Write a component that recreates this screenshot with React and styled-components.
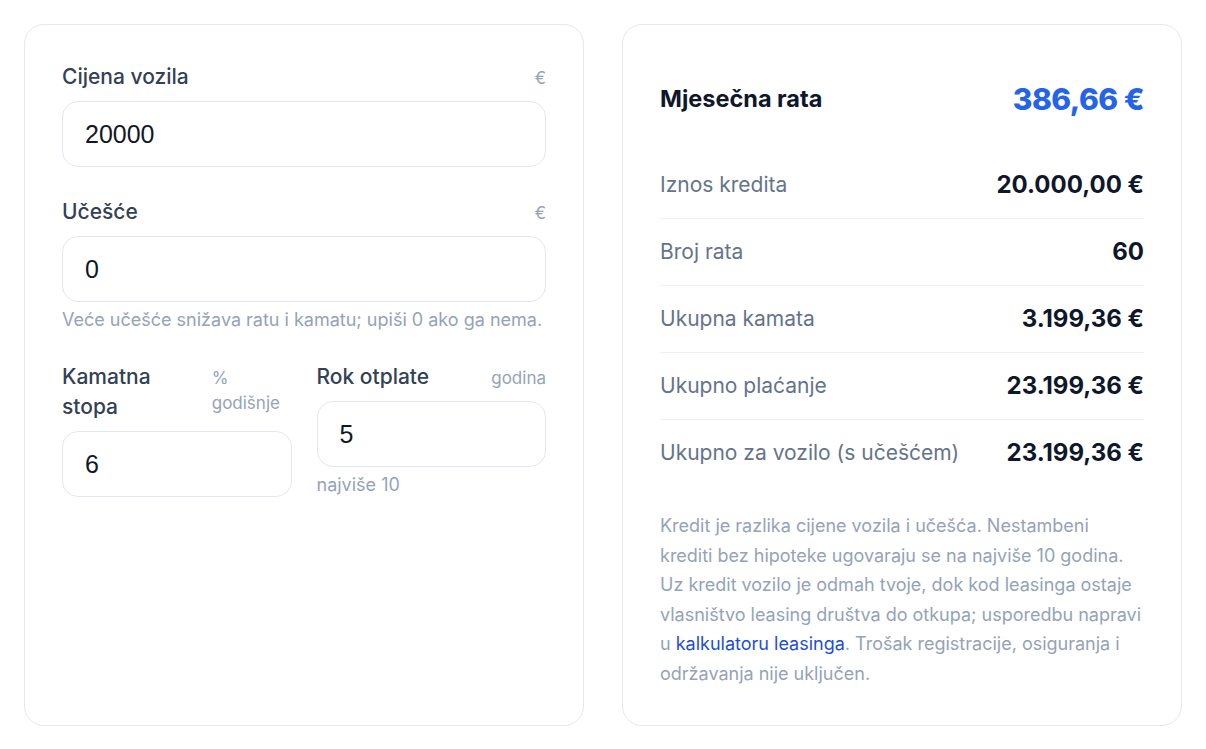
import React from "react";
import styled, { createGlobalStyle } from "styled-components";

const GlobalStyle = createGlobalStyle`
  html, body { margin: 0; padding: 0; background: #ffffff; }
  body { font-family: "Inter", "Noto Sans", sans-serif; -webkit-font-smoothing: antialiased; }
  * { box-sizing: border-box; }
`;

const Page = styled.div`
  display: grid;
  grid-template-columns: 1fr 1fr;
  gap: 38px;
  padding: 24px;
  align-items: stretch;
`;

const Card = styled.section`
  background: #ffffff;
  border: 1px solid #e6e8ec;
  border-radius: 20px;
  padding: 37px;
  display: flex;
  flex-direction: column;
`;

const Form = styled.div`
  display: flex;
  flex-direction: column;
  gap: 30px;
`;

const Field = styled.div`
  display: flex;
  flex-direction: column;
  min-width: 0;
`;

const LabelRow = styled.div`
  display: flex;
  justify-content: space-between;
  align-items: baseline;
  gap: 16px;
  margin-bottom: 9px;
`;

const Label = styled.label`
  font-size: 21px;
  line-height: 30px;
  font-weight: 500;
  color: #334155;
`;

const Unit = styled.span`
  font-size: 17px;
  line-height: 25px;
  color: #94a3b8;
`;

const Input = styled.input`
  width: 100%;
  height: 66px;
  border: 1px solid #e2e8f0;
  border-radius: 16px;
  padding: 0 22px;
  font-family: "Liberation Sans", Arial, sans-serif;
  font-size: 25px;
  color: #111827;
  background: #ffffff;
  outline: none;
`;

const Help = styled.p`
  margin: 6px 0 0;
  font-size: 18px;
  line-height: 24px;
  color: #94a3b8;
`;

const TwoCols = styled.div`
  display: grid;
  grid-template-columns: 1fr 1fr;
  gap: 25px;
  align-items: start;
`;

const Header = styled.div`
  display: flex;
  justify-content: space-between;
  align-items: center;
  padding: 22px 0;
  margin-bottom: 16px;
`;

const Title = styled.h2`
  margin: 0;
  font-size: 23.5px;
  line-height: 30px;
  font-weight: 700;
  color: #0f172a;
`;

const Monthly = styled.span`
  font-size: 30px;
  line-height: 30px;
  font-weight: 800;
  color: #2563eb;
  letter-spacing: -0.5px;
`;

const List = styled.div`
  display: flex;
  flex-direction: column;
`;

const Row = styled.div`
  display: flex;
  justify-content: space-between;
  align-items: center;
  padding: 20px 0;
  border-bottom: 1px solid #eceff3;
  ${(p) => (p.$last ? "border-bottom: none;" : "")}
`;

const RowLabel = styled.span`
  font-size: 21px;
  line-height: 26px;
  color: #64748b;
`;

const RowValue = styled.span`
  font-size: 24px;
  line-height: 26px;
  font-weight: 700;
  color: #0f172a;
`;

const Note = styled.p`
  margin: 25px 0 0;
  font-size: 18px;
  line-height: 29.5px;
  color: #94a3b8;
`;

const Link = styled.a`
  color: #1d4ed8;
  text-decoration: none;
`;

const rows = [
  ["Iznos kredita", "20.000,00 €"],
  ["Broj rata", "60"],
  ["Ukupna kamata", "3.199,36 €"],
  ["Ukupno plaćanje", "23.199,36 €"],
  ["Ukupno za vozilo (s učešćem)", "23.199,36 €"],
];

export default function App() {
  return (
    <>
      <GlobalStyle />
      <Page>
        <Card>
          <Form>
            <Field>
              <LabelRow>
                <Label>Cijena vozila</Label>
                <Unit>€</Unit>
              </LabelRow>
              <Input defaultValue="20000" />
            </Field>
            <Field>
              <LabelRow>
                <Label>Učešće</Label>
                <Unit>€</Unit>
              </LabelRow>
              <Input defaultValue="0" />
              <Help>Veće učešće snižava ratu i kamatu; upiši 0 ako ga nema.</Help>
            </Field>
            <TwoCols>
              <Field>
                <LabelRow>
                  <Label>Kamatna stopa</Label>
                  <Unit>% godišnje</Unit>
                </LabelRow>
                <Input defaultValue="6" />
              </Field>
              <Field>
                <LabelRow>
                  <Label>Rok otplate</Label>
                  <Unit>godina</Unit>
                </LabelRow>
                <Input defaultValue="5" />
                <Help>najviše 10</Help>
              </Field>
            </TwoCols>
          </Form>
        </Card>
        <Card>
          <Header>
            <Title>Mjesečna rata</Title>
            <Monthly>386,66 €</Monthly>
          </Header>
          <List>
            {rows.map(([l, v], i) => (
              <Row key={l} $last={i === rows.length - 1}>
                <RowLabel>{l}</RowLabel>
                <RowValue>{v}</RowValue>
              </Row>
            ))}
          </List>
          <Note>
            Kredit je razlika cijene vozila i učešća. Nestambeni krediti bez
            hipoteke ugovaraju se na najviše 10 godina. Uz kredit vozilo je
            odmah tvoje, dok kod leasinga ostaje vlasništvo leasing društva do
            otkupa; usporedbu napravi u <Link href="#">kalkulatoru leasinga</Link>.
            Trošak registracije, osiguranja i održavanja nije uključen.
          </Note>
        </Card>
      </Page>
    </>
  );
}
